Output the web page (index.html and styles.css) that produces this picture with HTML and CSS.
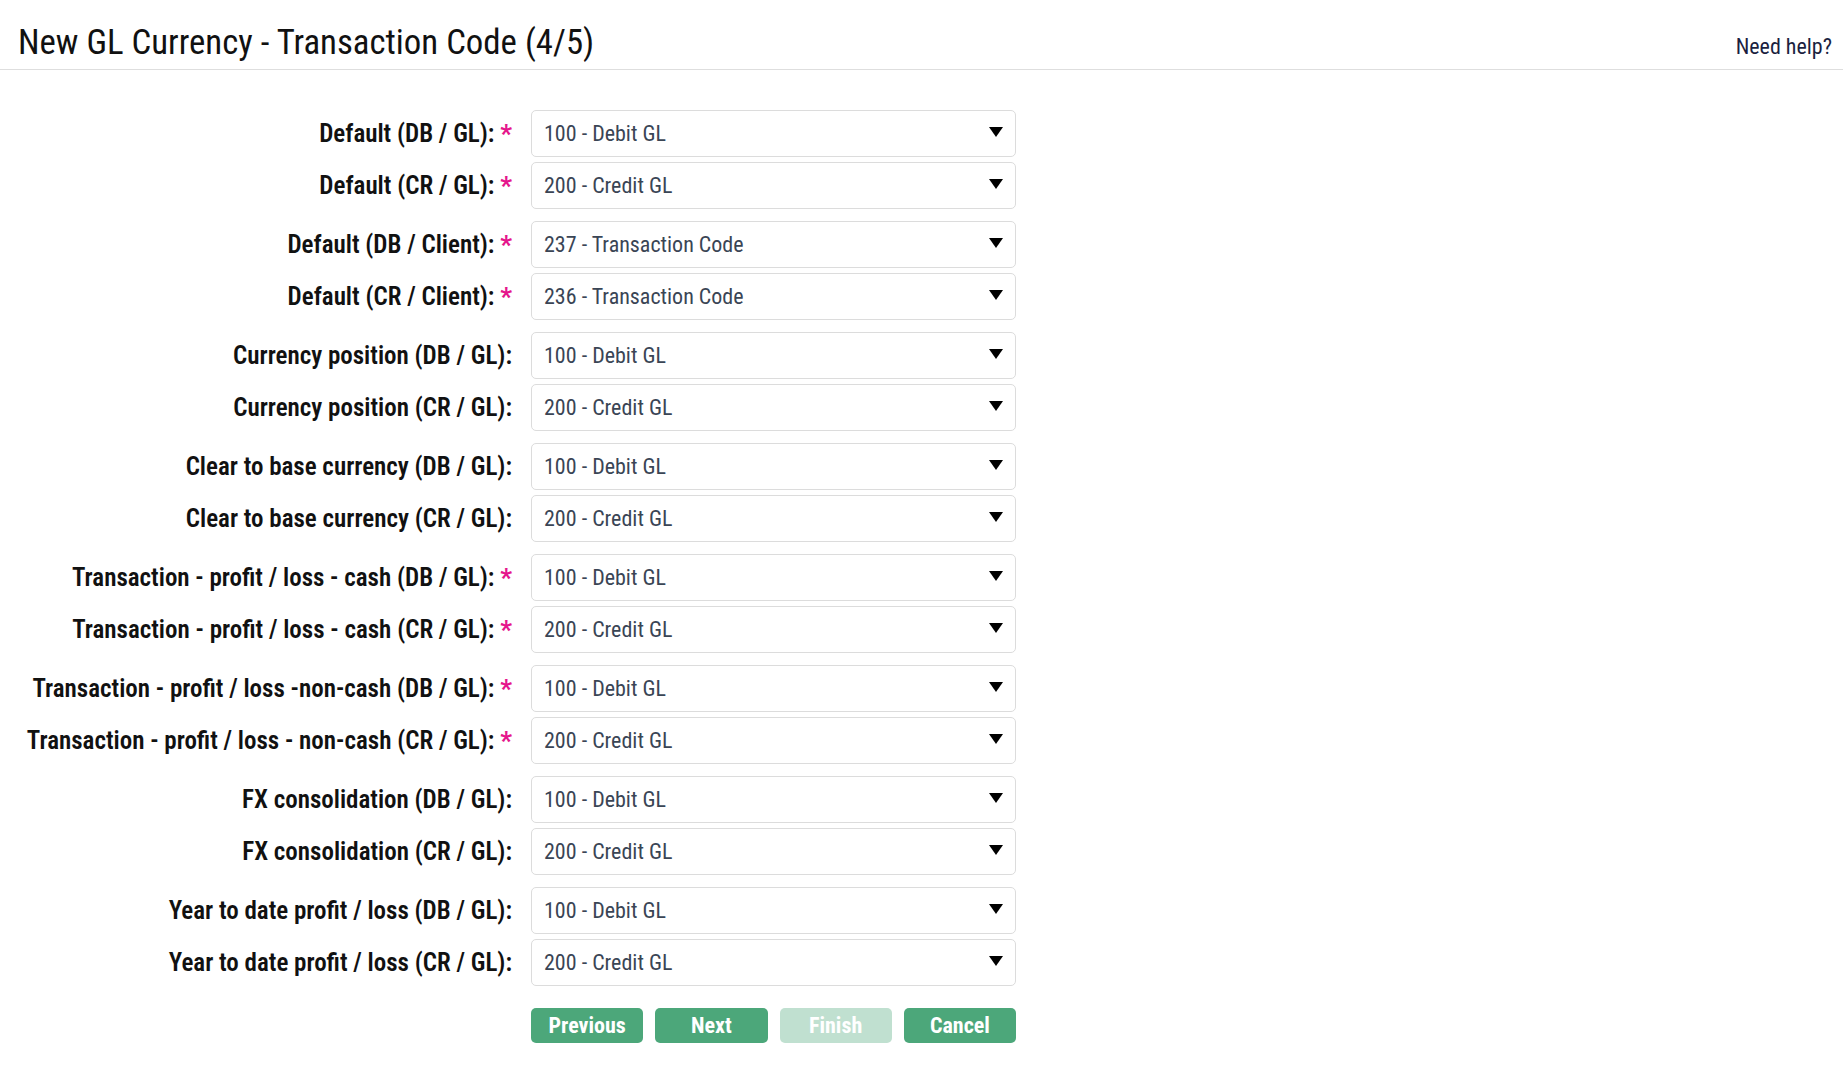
FILE: index.html
```html
<!DOCTYPE html>
<html lang="en">
<head>
<meta charset="utf-8">
<title>New GL Currency - Transaction Code (4/5)</title>
<link rel="stylesheet" href="styles.css">
</head>
<body>
<header class="page-header">
  <h1 class="page-title">New GL Currency - Transaction Code (4/5)</h1>
  <a class="help-link" href="#">Need help?</a>
</header>

<main class="wizard">
  <div class="pair">
    <div class="field"><label class="field-label">Default (DB / GL): <span class="req">*</span></label><div class="select"><span class="select-value">100 - Debit GL</span><svg class="caret" viewBox="0 0 14 10"><path d="M0 0H14L7 10Z"/></svg></div></div>
    <div class="field"><label class="field-label">Default (CR / GL): <span class="req">*</span></label><div class="select"><span class="select-value">200 - Credit GL</span><svg class="caret" viewBox="0 0 14 10"><path d="M0 0H14L7 10Z"/></svg></div></div>
  </div>
  <div class="pair">
    <div class="field"><label class="field-label">Default (DB / Client): <span class="req">*</span></label><div class="select"><span class="select-value">237 - Transaction Code</span><svg class="caret" viewBox="0 0 14 10"><path d="M0 0H14L7 10Z"/></svg></div></div>
    <div class="field"><label class="field-label">Default (CR / Client): <span class="req">*</span></label><div class="select"><span class="select-value">236 - Transaction Code</span><svg class="caret" viewBox="0 0 14 10"><path d="M0 0H14L7 10Z"/></svg></div></div>
  </div>
  <div class="pair">
    <div class="field"><label class="field-label">Currency position (DB / GL):</label><div class="select"><span class="select-value">100 - Debit GL</span><svg class="caret" viewBox="0 0 14 10"><path d="M0 0H14L7 10Z"/></svg></div></div>
    <div class="field"><label class="field-label">Currency position (CR / GL):</label><div class="select"><span class="select-value">200 - Credit GL</span><svg class="caret" viewBox="0 0 14 10"><path d="M0 0H14L7 10Z"/></svg></div></div>
  </div>
  <div class="pair">
    <div class="field"><label class="field-label">Clear to base currency (DB / GL):</label><div class="select"><span class="select-value">100 - Debit GL</span><svg class="caret" viewBox="0 0 14 10"><path d="M0 0H14L7 10Z"/></svg></div></div>
    <div class="field"><label class="field-label">Clear to base currency (CR / GL):</label><div class="select"><span class="select-value">200 - Credit GL</span><svg class="caret" viewBox="0 0 14 10"><path d="M0 0H14L7 10Z"/></svg></div></div>
  </div>
  <div class="pair">
    <div class="field"><label class="field-label">Transaction - profit / loss - cash (DB / GL): <span class="req">*</span></label><div class="select"><span class="select-value">100 - Debit GL</span><svg class="caret" viewBox="0 0 14 10"><path d="M0 0H14L7 10Z"/></svg></div></div>
    <div class="field"><label class="field-label">Transaction - profit / loss - cash (CR / GL): <span class="req">*</span></label><div class="select"><span class="select-value">200 - Credit GL</span><svg class="caret" viewBox="0 0 14 10"><path d="M0 0H14L7 10Z"/></svg></div></div>
  </div>
  <div class="pair">
    <div class="field"><label class="field-label">Transaction - profit / loss -non-cash (DB / GL): <span class="req">*</span></label><div class="select"><span class="select-value">100 - Debit GL</span><svg class="caret" viewBox="0 0 14 10"><path d="M0 0H14L7 10Z"/></svg></div></div>
    <div class="field"><label class="field-label">Transaction - profit / loss - non-cash (CR / GL): <span class="req">*</span></label><div class="select"><span class="select-value">200 - Credit GL</span><svg class="caret" viewBox="0 0 14 10"><path d="M0 0H14L7 10Z"/></svg></div></div>
  </div>
  <div class="pair">
    <div class="field"><label class="field-label">FX consolidation (DB / GL):</label><div class="select"><span class="select-value">100 - Debit GL</span><svg class="caret" viewBox="0 0 14 10"><path d="M0 0H14L7 10Z"/></svg></div></div>
    <div class="field"><label class="field-label">FX consolidation (CR / GL):</label><div class="select"><span class="select-value">200 - Credit GL</span><svg class="caret" viewBox="0 0 14 10"><path d="M0 0H14L7 10Z"/></svg></div></div>
  </div>
  <div class="pair">
    <div class="field"><label class="field-label">Year to date profit / loss (DB / GL):</label><div class="select"><span class="select-value">100 - Debit GL</span><svg class="caret" viewBox="0 0 14 10"><path d="M0 0H14L7 10Z"/></svg></div></div>
    <div class="field"><label class="field-label">Year to date profit / loss (CR / GL):</label><div class="select"><span class="select-value">200 - Credit GL</span><svg class="caret" viewBox="0 0 14 10"><path d="M0 0H14L7 10Z"/></svg></div></div>
  </div>

  <div class="actions">
    <button class="btn" type="button">Previous</button>
    <button class="btn" type="button">Next</button>
    <button class="btn btn-disabled" type="button" disabled>Finish</button>
    <button class="btn" type="button">Cancel</button>
  </div>
</main>
</body>
</html>
```
FILE: styles.css
```css
* { box-sizing: border-box; }

html, body {
  margin: 0;
  padding: 0;
  background: #ffffff;
}

body {
  font-family: Roboto, "Liberation Sans", sans-serif;
  font-stretch: 75%;
  color: #111111;
}

.page-header {
  display: flex;
  justify-content: space-between;
  align-items: baseline;
  height: 70px;
  padding: 22px 11px 0 18px;
  border-bottom: 1px solid #dedede;
}

.page-title {
  margin: 0;
  font-size: 34.8px;
  line-height: 40px;
  font-weight: 400;
  color: #111111;
}

.help-link {
  font-size: 22px;
  line-height: 26px;
  color: #1b1f3f;
  text-decoration: none;
}

.wizard {
  display: flex;
  flex-direction: column;
  gap: 12px;
  padding-top: 40px;
}

.pair {
  display: flex;
  flex-direction: column;
  gap: 5px;
}

.field {
  display: grid;
  grid-template-columns: 512px 485px;
  column-gap: 19px;
  align-items: center;
}

.field-label {
  display: flex;
  justify-content: flex-end;
  align-items: center;
  white-space: pre;
  font-size: 25px;
  font-weight: 600;
  color: #111111;
}

.req {
  color: #e5168c;
  font-size: 26px;
  font-weight: 700;
}

.select {
  display: flex;
  align-items: center;
  justify-content: space-between;
  height: 47px;
  padding: 0 12px 0 12px;
  border: 1px solid #dcdcdc;
  border-radius: 5px;
  background: #ffffff;
}

.select-value {
  font-size: 22px;
  font-stretch: 81%;
  color: #3a4555;
}

.caret {
  width: 14px;
  height: 10px;
  margin-top: -3px;
  fill: #000000;
}

.actions {
  display: grid;
  grid-template-columns: repeat(4, 1fr);
  column-gap: 12px;
  width: 485px;
  margin: 10px 0 0 531px;
}

.btn {
  height: 35px;
  padding: 0;
  border: none;
  border-radius: 5px;
  background: #4ca77a;
  color: #ffffff;
  font-family: Roboto, "Liberation Sans", sans-serif;
  font-stretch: 75%;
  font-size: 22px;
  font-weight: 700;
  cursor: pointer;
}

.btn-disabled {
  opacity: 0.35;
  cursor: default;
}
```
